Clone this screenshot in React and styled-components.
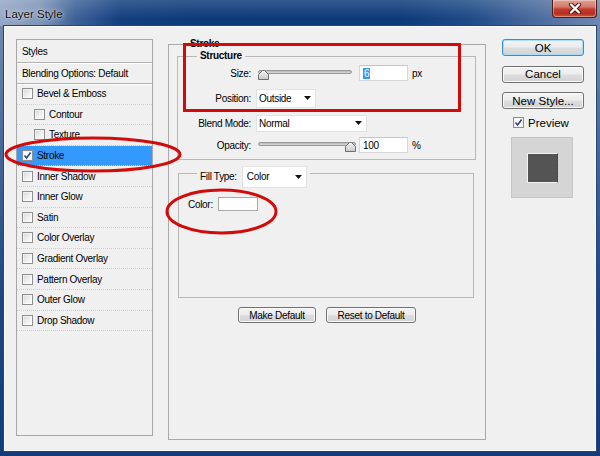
import React from 'react';
import styled, { createGlobalStyle } from 'styled-components';

const UI = "'Liberation Sans', Arial, sans-serif";

const GlobalStyle = createGlobalStyle`
  html, body { margin: 0; padding: 0; background: #123c7a; }
  body { width: 600px; height: 456px; overflow: hidden; }
  * { box-sizing: border-box; }
`;

const Window = styled.div`
  position: relative;
  width: 600px;
  height: 456px;
  display: flex;
  flex-direction: column;
  overflow: hidden;
  font-family: ${UI};
  color: #000;
  background: linear-gradient(to bottom, #7a90b0 0%, #4a6a9b 30%, #1d4682 65%, #123c7a 100%);
`;

const TitleBar = styled.div`
  height: 26px;
  flex: none;
  display: flex;
  align-items: flex-start;
  justify-content: space-between;
  background:
    linear-gradient(to bottom, rgba(255,255,255,0.16), rgba(255,255,255,0) 70%),
    linear-gradient(to right, #95a8c5 0px, #7e95b8 40px, #3d6298 75px, #14407f 120px, #0e3a7a 200px, #0e3a7a 400px, #1f4b88 470px, #4d6d9f 540px, #7088b0 600px);
`;

const Title = styled.div`
  margin-top: 6px;
  padding-left: 5px;
  font-family: 'Liberation Sans', Arial, sans-serif;
  font-size: 11.5px;
  line-height: 16px;
  color: #111;
  text-shadow: 0 0 6px rgba(255,255,255,0.85), 0 0 2px rgba(255,255,255,0.6);
`;

const CloseButton = styled.div`
  width: 45px;
  height: 18px;
  margin-right: 3px;
  display: flex;
  align-items: center;
  justify-content: center;
  border: 1px solid #4a1d1a;
  border-top: none;
  border-radius: 0 0 4px 4px;
  background: linear-gradient(to bottom, #e1a095 0%, #d67a6c 40%, #c23a2a 55%, #b8301f 80%, #d0583f 100%);
  box-shadow: inset 0 0 0 1px rgba(255,255,255,0.35);
`;

const Client = styled.div`
  flex: 1;
  margin: 0 4px 5px;
  background: #f0f0f0;
  border: 1px solid #fbfbfb;
  box-shadow: 0 0 0 1px #22467c;
  display: flex;
  align-items: flex-start;
  padding: 12px 11px 0 11px;
`;

/* ---------- left list ---------- */
const StylesPanel = styled.div`
  width: 137px;
  height: 397px;
  flex: none;
  margin-right: 15px;
  border: 1px solid #a7a7a7;
  background: #f0f0f0;
  display: flex;
  flex-direction: column;
  font-size: 10px;
  letter-spacing: -0.3px;
`;

const HeaderRow = styled.div`
  height: ${p => p.$h}px;
  flex: none;
  display: flex;
  align-items: center;
  padding-left: 5px;
  border-bottom: 1px solid #b3b3b3;
  box-shadow: 0 1px 0 #fff;
`;

const ItemRow = styled.div`
  height: 20.6px;
  flex: none;
  display: flex;
  align-items: center;
  gap: 4px;
  padding-left: ${p => (p.$indent ? 17 : 5)}px;
  border-bottom: 1px dotted #cfcfcf;
  background: ${p => (p.$selected ? '#3399ff' : 'transparent')};
`;

const Box = styled.span`
  width: 11px;
  height: 11px;
  flex: none;
  display: inline-flex;
  align-items: center;
  justify-content: center;
  border: 1px solid #8e8f8f;
  background: ${p => (p.$checked ? '#ffffff' : 'linear-gradient(135deg, #d4d6da 0%, #f2f2f2 60%, #fbfbfb 100%)')};
  box-shadow: inset 0 0 0 1px ${p => (p.$checked ? '#f2f2f2' : 'rgba(255,255,255,0.5)')};
`;

const Checkbox = ({ checked }) => (
  <Box $checked={checked}>
    {checked && (
      <svg width="9" height="9" viewBox="0 0 9 9">
        <path d="M1.5 4.6 L3.6 7 L7.6 1.5" fill="none" stroke="#23398a" strokeWidth="1.5" />
      </svg>
    )}
  </Box>
);

/* ---------- group boxes ---------- */
const StrokeGroup = styled.fieldset`
  width: 318px;
  height: 402px;
  flex: none;
  margin: -1px 16px 0 0;
  padding: 0;
  min-width: 0;
  border: 1px solid #a9a9a9;
  display: flex;
  flex-direction: column;
  font-size: 10px;
  letter-spacing: -0.3px;
`;

const Legend = styled.legend`
  margin-left: ${p => p.$ml}px;
  padding: ${p => p.$pt || 0}px 3px 0;
  font-weight: ${p => (p.$bold ? 700 : 400)};
  line-height: 12px;
  display: flex;
  align-items: center;
  gap: 5px;
`;

const SubGroup = styled.fieldset`
  margin: ${p => p.$mt || 0}px ${p => p.$mr}px 0 ${p => p.$ml}px;
  padding: 0;
  min-width: 0;
  border: 1px solid #b8b8b8;
`;

const StructureBody = styled.div`
  padding: 1px 0 4px;
  display: flex;
  flex-direction: column;
  gap: 5px;
`;

const FieldRow = styled.div`
  height: 20px;
  display: flex;
  align-items: center;
  margin-top: ${p => (p.$pull ? -3 : 0)}px;
`;

const FieldLabel = styled.span`
  width: 73px;
  flex: none;
  text-align: right;
  margin-right: 5px;
`;

const SliderWrap = styled.div`
  position: relative;
  width: ${p => p.$w}px;
  height: 10px;
  margin: 4px 0 0 2px;
  flex: none;
`;

const Track = styled.div`
  height: 4px;
  border: 1px solid #9a9a9a;
  border-radius: 2px;
  background: linear-gradient(to bottom, #b8b8b8, #d8d8d8);
`;

const Thumb = styled.svg`
  position: absolute;
  top: 0;
`;

const Slider = ({ w, value }) => (
  <SliderWrap $w={w}>
    <Track />
    <Thumb width="11" height="10" viewBox="0 0 11 10" style={{ left: `${((w - 11) * value) / 100}px` }}>
      <defs>
        <linearGradient id={`tg${w}`} x1="0" y1="0" x2="0" y2="1">
          <stop offset="0" stopColor="#f4f4f4" />
          <stop offset="1" stopColor="#c9c9c9" />
        </linearGradient>
      </defs>
      <path d="M0.5 9.5 L0.5 4.5 L4.5 0.5 L6.5 0.5 L10.5 4.5 L10.5 9.5 Z" fill={`url(#tg${w})`} stroke="#6e6e6e" />
    </Thumb>
  </SliderWrap>
);

const NumberBox = styled.div`
  width: 49px;
  height: 16px;
  flex: none;
  margin-left: ${p => p.$ml}px;
  display: flex;
  align-items: center;
  padding-left: 3px;
  background: #fff;
  border: 1px solid #d6d6d6;
  border-top-color: #c4c4c4;
`;

const Selected = styled.span`
  background: #3399ff;
  color: #fff;
  padding: 0 1px;
`;

const Unit = styled.span`
  margin-left: 4px;
`;

const DropBox = styled.div`
  width: ${p => p.$w}px;
  height: ${p => p.$h}px;
  flex: none;
  display: flex;
  align-items: center;
  justify-content: space-between;
  padding: 0 4px 0 ${p => p.$pl || 2}px;
  background: #fff;
  border: 1px solid #e2e2e2;
  font-weight: 400;
`;

const Dropdown = ({ w, h, pl, children }) => (
  <DropBox $w={w} $h={h} $pl={pl}>
    <span>{children}</span>
    <svg width="7" height="4" viewBox="0 0 7 4">
      <path d="M0 0 H7 L3.5 4 Z" fill="#111" />
    </svg>
  </DropBox>
);

const FillBody = styled.div`
  height: 109px;
  padding: 9px 0 0 9px;
`;

const ColorRow = styled.div`
  display: flex;
  align-items: center;
  gap: 5px;
`;

const Swatch = styled.div`
  width: 40px;
  height: 14px;
  background: #fff;
  border: 1px solid #a9a9a9;
`;

const ButtonRow = styled.div`
  margin-top: 9px;
  display: flex;
  justify-content: center;
  gap: 10px;
`;

const WinButton = styled.div`
  width: ${p => p.$w}px;
  height: ${p => p.$h}px;
  display: flex;
  align-items: center;
  justify-content: center;
  border: 1px solid ${p => (p.$default ? '#3c8ad0' : '#707070')};
  border-radius: 3px;
  background: linear-gradient(to bottom, #f4f4f4 0%, #ececec 48%, #dedede 52%, #d2d2d2 100%);
  box-shadow: inset 0 0 0 1px ${p => (p.$default ? '#a9dcf8' : '#fbfbfb')};
  font-size: ${p => p.$fs}px;
  letter-spacing: ${p => (p.$fs > 10 ? 0 : -0.3)}px;
  white-space: nowrap;
`;

/* ---------- right column ---------- */
const RightColumn = styled.div`
  width: 82px;
  flex: none;
  display: flex;
  flex-direction: column;
  gap: 9.5px;
`;

const PreviewToggle = styled.div`
  height: 11px;
  margin-top: -1.5px;
  padding-left: 11px;
  display: flex;
  align-items: center;
  gap: 4px;
  font-size: 11.5px;
`;

const PreviewBox = styled.div`
  width: 62px;
  height: 61px;
  margin: -0.5px 0 0 9px;
  display: flex;
  align-items: center;
  justify-content: center;
  background: #d5d5d5;
  border: 1px solid #c6c6c6;
`;

const PreviewSquare = styled.div`
  width: 31px;
  height: 30px;
  background: #545454;
  border: 1px solid #f4f4f4;
  border-right-style: dotted;
  border-right-color: #3a3a3a;
`;

/* ---------- annotations ---------- */
const Annotations = styled.svg`
  position: absolute;
  left: 0;
  top: 0;
  pointer-events: none;
`;

const items = [
  { label: 'Bevel & Emboss' },
  { label: 'Contour', indent: true },
  { label: 'Texture', indent: true },
  { label: 'Stroke', checked: true, selected: true },
  { label: 'Inner Shadow' },
  { label: 'Inner Glow' },
  { label: 'Satin' },
  { label: 'Color Overlay' },
  { label: 'Gradient Overlay' },
  { label: 'Pattern Overlay' },
  { label: 'Outer Glow' },
  { label: 'Drop Shadow' },
];

export default function App() {
  return (
    <>
      <GlobalStyle />
      <Window>
        <TitleBar>
          <Title>Layer Style</Title>
          <CloseButton>
            <svg width="14" height="11" viewBox="0 0 14 11">
              <path d="M3 1.5 L11 9.5 M11 1.5 L3 9.5" stroke="#4b1410" strokeWidth="4.2" strokeLinecap="round" />
              <path d="M3 1.5 L11 9.5 M11 1.5 L3 9.5" stroke="#ffffff" strokeWidth="2.4" strokeLinecap="round" />
            </svg>
          </CloseButton>
        </TitleBar>
        <Client>
          <StylesPanel>
            <HeaderRow $h={23}>Styles</HeaderRow>
            <HeaderRow $h={21}>Blending Options: Default</HeaderRow>
            {items.map(it => (
              <ItemRow key={it.label} $indent={it.indent} $selected={it.selected}>
                <Checkbox checked={it.checked} />
                <span>{it.label}</span>
              </ItemRow>
            ))}
          </StylesPanel>

          <StrokeGroup>
            <Legend $ml={18} $bold>Stroke</Legend>
            <SubGroup $ml={8} $mr={9}>
              <Legend $ml={19} $bold>Structure</Legend>
              <StructureBody>
                <FieldRow>
                  <FieldLabel>Size:</FieldLabel>
                  <Slider w={94} value={0} />
                  <NumberBox $ml={7}><Selected>6</Selected></NumberBox>
                  <Unit>px</Unit>
                </FieldRow>
                <FieldRow>
                  <FieldLabel>Position:</FieldLabel>
                  <Dropdown w={60} h={19}>Outside</Dropdown>
                </FieldRow>
                <FieldRow>
                  <FieldLabel>Blend Mode:</FieldLabel>
                  <Dropdown w={111} h={17}>Normal</Dropdown>
                </FieldRow>
                <FieldRow $pull>
                  <FieldLabel>Opacity:</FieldLabel>
                  <Slider w={98} value={100} />
                  <NumberBox $ml={3}>100</NumberBox>
                  <Unit>%</Unit>
                </FieldRow>
              </StructureBody>
            </SubGroup>
            <SubGroup $ml={9} $mr={11} $mt={-2}>
              <Legend $ml={18} $pt={8}>
                <span>Fill Type:</span>
                <Dropdown w={65} h={22} pl={4}>Color</Dropdown>
              </Legend>
              <FillBody>
                <ColorRow>
                  <span>Color:</span>
                  <Swatch />
                </ColorRow>
              </FillBody>
            </SubGroup>
            <ButtonRow>
              <WinButton $w={78} $h={16} $fs={10}>Make Default</WinButton>
              <WinButton $w={90} $h={16} $fs={10}>Reset to Default</WinButton>
            </ButtonRow>
          </StrokeGroup>

          <RightColumn>
            <WinButton $w={82} $h={17} $fs={11.5} $default>OK</WinButton>
            <WinButton $w={82} $h={17} $fs={11.5}>Cancel</WinButton>
            <WinButton $w={82} $h={17} $fs={11.5}>New Style...</WinButton>
            <PreviewToggle>
              <Checkbox checked />
              <span>Preview</span>
            </PreviewToggle>
            <PreviewBox>
              <PreviewSquare />
            </PreviewBox>
          </RightColumn>
        </Client>

        <Annotations width="600" height="456" viewBox="0 0 600 456">
          <rect x="184.5" y="44.5" width="275" height="66" fill="none" stroke="#d20a0a" strokeWidth="3" />
          <ellipse cx="93" cy="154.5" rx="87" ry="16.5" fill="none" stroke="#d20a0a" strokeWidth="3" />
          <ellipse cx="221.5" cy="211.5" rx="54.5" ry="21.5" fill="none" stroke="#d20a0a" strokeWidth="3" />
        </Annotations>
      </Window>
    </>
  );
}
